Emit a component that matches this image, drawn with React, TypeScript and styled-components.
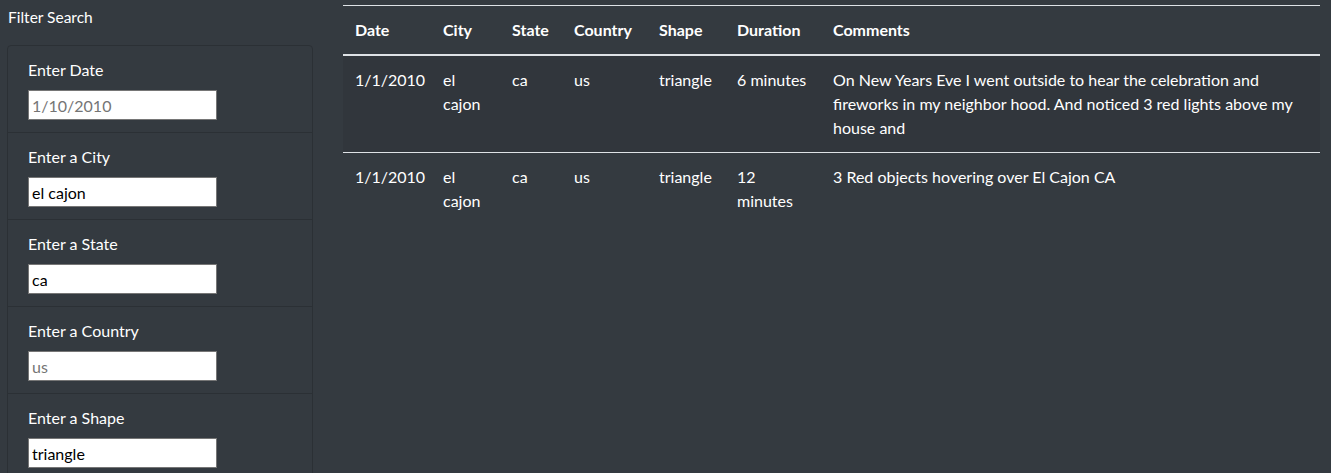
import React from "react";
import styled, { createGlobalStyle } from "styled-components";

const Global = createGlobalStyle`
  html, body { margin: 0; padding: 0; background: #343a40; }
  body { font-family: Lato, "Noto Sans", sans-serif; color: #fff; font-size: 16px; line-height: 1.5; }
  * { box-sizing: border-box; }
`;

const Page = styled.div`
  display: flex;
  align-items: flex-start;
  padding: 0 11px 0 7px;
  height: 473px;
  overflow: hidden;
`;

const Sidebar = styled.aside`
  width: 306px;
  flex: none;
`;

const SidebarTitle = styled.div`
  font-size: 15.5px;
  line-height: 22px;
  padding: 6px 0 0 1px;
  margin-bottom: 17px;
`;

const Card = styled.ul`
  list-style: none;
  margin: 0;
  padding: 0;
  border: 1px solid #2b3035;
  border-radius: 4px;
`;

const Item = styled.li`
  padding: 12px 20px;
  border-top: 1px solid #2b3035;
  &:first-child { border-top: none; }
`;

const Label = styled.label`
  display: block;
  line-height: 24px;
  margin-bottom: 8px;
`;

const Input = styled.input`
  display: block;
  width: 189px;
  height: 30px;
  padding: 1px 3px;
  border: 1px solid #767676;
  background: #fff;
  font-family: Lato, "Noto Sans", sans-serif;
  font-size: 16px;
  color: #000;
  &::placeholder { color: #757575; }
`;

const Main = styled.main`
  flex: 1;
  margin-left: 30px;
  padding-top: 5px;
`;

const Table = styled.table`
  width: 100%;
  border-collapse: collapse;
  table-layout: fixed;
  color: #fff;
`;

const Col = styled.col<{ $w: number }>`
  width: ${(p) => p.$w}px;
`;

const Th = styled.th`
  text-align: left;
  font-weight: 700;
  padding: 12px;
  line-height: 24px;
  border-top: 1px solid #dee2e6;
  border-bottom: 2px solid #dee2e6;
  vertical-align: bottom;
`;

const Tr = styled.tr<{ $striped?: boolean }>`
  background: ${(p) => (p.$striped ? "#31363c" : "transparent")};
`;

const Td = styled.td`
  padding: 12px;
  line-height: 24px;
  vertical-align: top;
  border-top: 1px solid #dee2e6;
`;

const FirstBodyRow = styled(Tr)`
  & > td { border-top: none; }
`;

const filters = [
  { label: "Enter Date", value: "", placeholder: "1/10/2010" },
  { label: "Enter a City", value: "el cajon", placeholder: "" },
  { label: "Enter a State", value: "ca", placeholder: "" },
  { label: "Enter a Country", value: "", placeholder: "us" },
  { label: "Enter a Shape", value: "triangle", placeholder: "" },
];

const cols = [88, 69, 62, 85, 78, 96, 499];
const heads = ["Date", "City", "State", "Country", "Shape", "Duration", "Comments"];

const rows = [
  ["1/1/2010", "el cajon", "ca", "us", "triangle", "6 minutes", "On New Years Eve I went outside to hear the celebration and fireworks in my neighbor hood. And noticed 3 red lights above my house and"],
  ["1/1/2010", "el cajon", "ca", "us", "triangle", "12 minutes", "3 Red objects hovering over El Cajon CA"],
];

export default function App() {
  return (
    <>
      <Global />
      <Page>
        <Sidebar>
          <SidebarTitle>Filter Search</SidebarTitle>
          <Card>
            {filters.map((f) => (
              <Item key={f.label}>
                <Label>{f.label}</Label>
                <Input defaultValue={f.value} placeholder={f.placeholder} />
              </Item>
            ))}
          </Card>
        </Sidebar>
        <Main>
          <Table>
            <colgroup>
              {cols.map((w, i) => (
                <Col key={i} $w={w} />
              ))}
            </colgroup>
            <thead>
              <tr>
                {heads.map((h) => (
                  <Th key={h}>{h}</Th>
                ))}
              </tr>
            </thead>
            <tbody>
              <FirstBodyRow $striped>
                {rows[0].map((c, i) => (
                  <Td key={i}>{c}</Td>
                ))}
              </FirstBodyRow>
              <Tr>
                {rows[1].map((c, i) => (
                  <Td key={i}>{c}</Td>
                ))}
              </Tr>
            </tbody>
          </Table>
        </Main>
      </Page>
    </>
  );
}
